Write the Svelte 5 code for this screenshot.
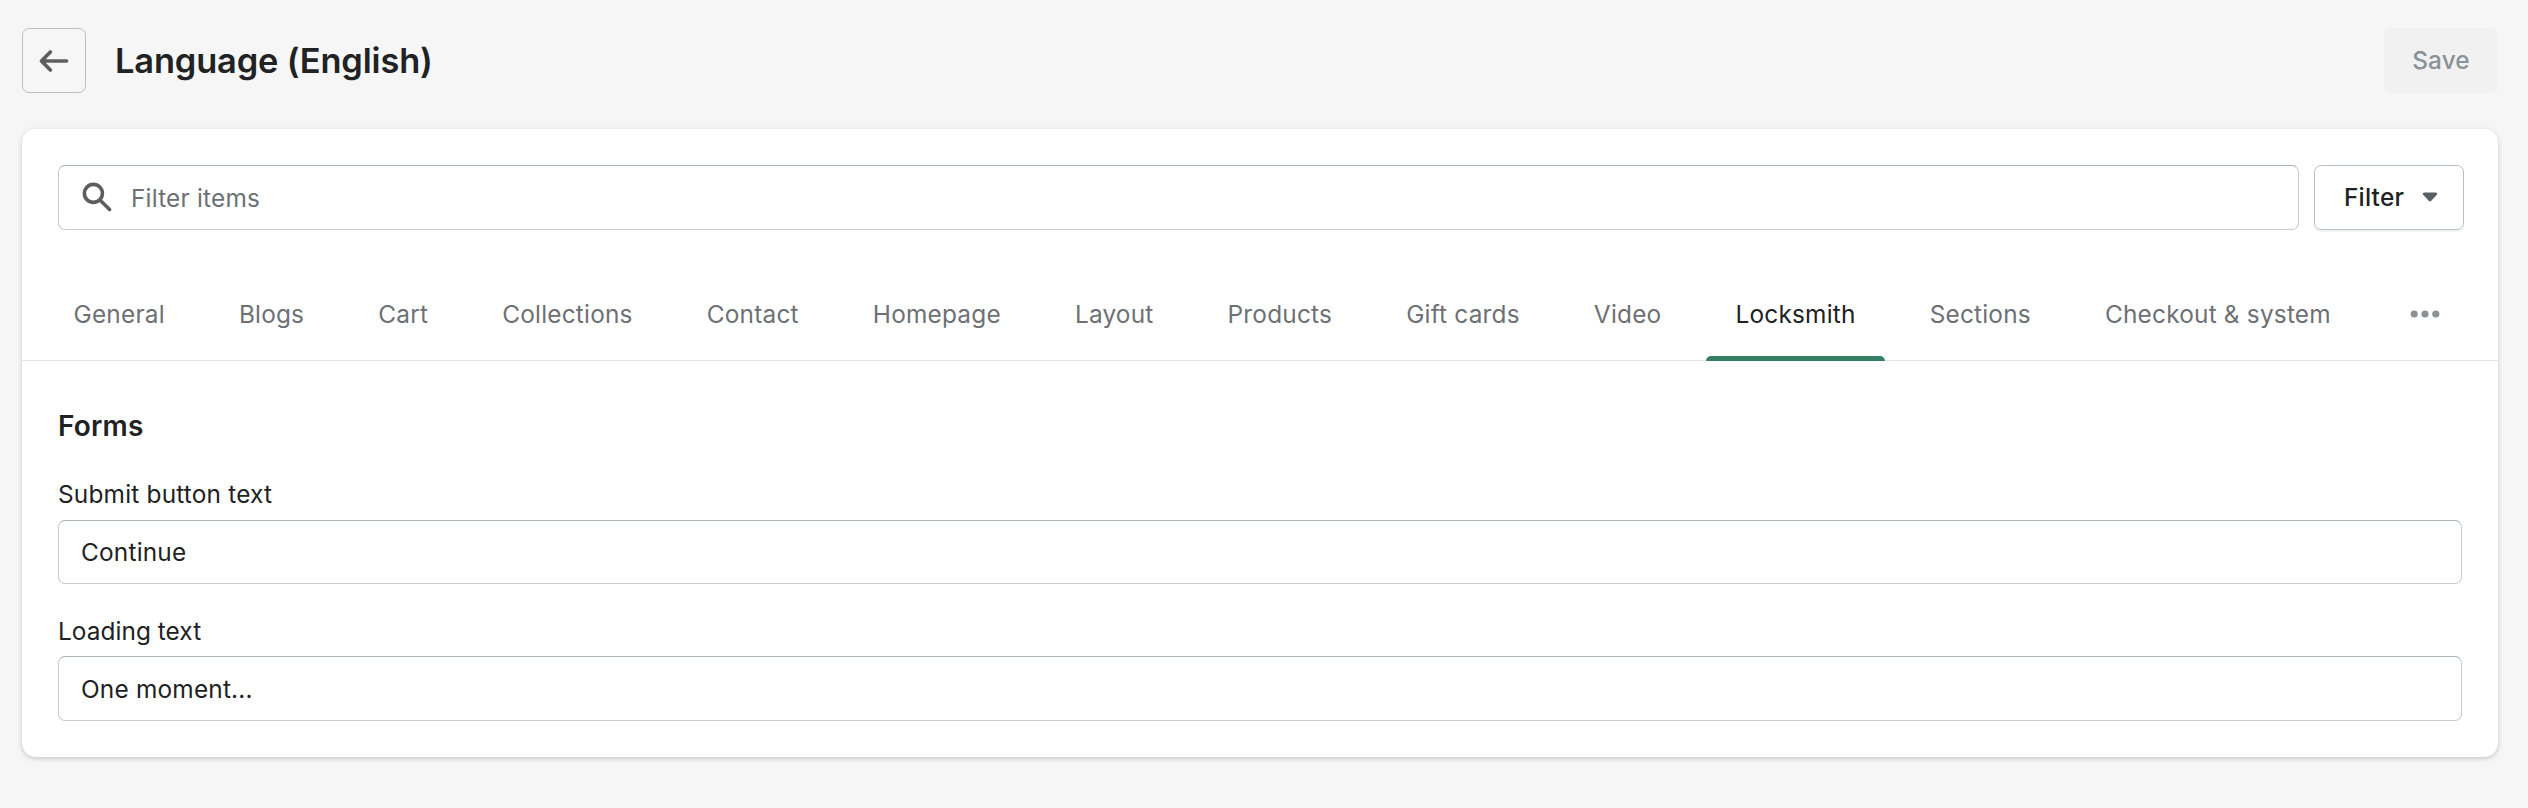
<script>
  const tabs = [
    'General', 'Blogs', 'Cart', 'Collections', 'Contact', 'Homepage', 'Layout',
    'Products', 'Gift cards', 'Video', 'Locksmith', 'Sections', 'Checkout & system'
  ];
  let active = $state('Locksmith');
  let fields = $state([
    { id: 'submit', label: 'Submit button text', value: 'Continue' },
    { id: 'loading', label: 'Loading text', value: 'One moment...' }
  ]);
</script>

<div class="page">
  <header class="header">
    <button class="back" aria-label="Back">
      <svg viewBox="0 0 20 20"><path d="M17 9H5.414l3.293-3.293a.999.999 0 1 0-1.414-1.414l-5 5a.999.999 0 0 0 0 1.414l5 5a.997.997 0 0 0 1.414 0 .999.999 0 0 0 0-1.414L5.414 11H17a1 1 0 1 0 0-2z" /></svg>
    </button>
    <h1>Language (English)</h1>
    <button class="save" disabled>Save</button>
  </header>

  <main class="card">
    <div class="filters">
      <div class="search">
        <svg viewBox="0 0 20 20"><path d="M8 12a4 4 0 1 1 0-8 4 4 0 0 1 0 8zm9.707 4.293-4.82-4.82A5.968 5.968 0 0 0 14 8 6 6 0 0 0 2 8a6 6 0 0 0 6 6 5.968 5.968 0 0 0 3.473-1.113l4.82 4.82a.997.997 0 0 0 1.414 0 .999.999 0 0 0 0-1.414z" /></svg>
        <input placeholder="Filter items" aria-label="Filter items" />
      </div>
      <button class="filter">
        <span>Filter</span>
        <svg viewBox="0 0 20 20"><path d="M13.098 8H6.902c-.751 0-1.172.754-.708 1.268L9.292 12.7c.36.399 1.055.399 1.416 0l3.098-3.433C14.27 8.754 13.849 8 13.098 8z" /></svg>
      </button>
    </div>

    <nav class="tabs">
      {#each tabs as tab}
        <button class="tab" class:active={tab === active} onclick={() => (active = tab)}>{tab}</button>
      {/each}
      <button class="more" aria-label="More">
        <svg viewBox="0 0 20 20"><path d="M6 10a2 2 0 1 1-4 0 2 2 0 0 1 4 0zm6 0a2 2 0 1 1-4 0 2 2 0 0 1 4 0zm6 0a2 2 0 1 1-4 0 2 2 0 0 1 4 0z" /></svg>
      </button>
    </nav>

    <section class="forms">
      <h2>Forms</h2>
      {#each fields as field (field.id)}
        <div class="field {field.id}">
          <label for={field.id}>{field.label}</label>
          <input id={field.id} bind:value={field.value} />
        </div>
      {/each}
    </section>
  </main>
</div>

<style>
  :global(body) {
    background: #f6f6f6;
  }
  .page,
  .page * {
    box-sizing: border-box;
  }
  .page {
    min-height: 808px;
    padding: 28px 30px 0 22px;
    background: #f6f6f6;
    color: #202223;
    font: 400 24.4px/30px Inter, sans-serif;
    letter-spacing: 0.2px;
  }
  button,
  input {
    margin: 0;
    padding: 0;
    border: 0;
    background: none;
    color: inherit;
    font: inherit;
    letter-spacing: inherit;
    outline: 0;
  }
  svg {
    display: block;
    flex: none;
    width: 36px;
    height: 36px;
    fill: #5c5f62;
  }
  .header {
    display: flex;
    align-items: flex-start;
    height: 65px;
  }
  .back {
    display: flex;
    align-items: center;
    justify-content: center;
    width: 64px;
    height: 65px;
    border: 1px solid #babfc3;
    border-radius: 7px;
  }
  h1 {
    flex: 1;
    margin: 12px 0 0 29px;
    font-size: 34.4px;
    font-weight: 600;
    line-height: 41px;
    letter-spacing: -0.15px;
  }
  .save {
    width: 114px;
    height: 65px;
    padding: 17px 0 18px;
    border-radius: 7px;
    background: #f1f1f1;
    color: #8c9196;
    font-weight: 500;
    letter-spacing: 0.1px;
  }
  .card {
    height: 628px;
    margin-top: 36px;
    padding-top: 36px;
    border-radius: 14px;
    background: #fff;
    box-shadow: 0 0 9px rgba(23, 24, 24, 0.05), 0 2px 4px rgba(0, 0, 0, 0.15);
  }
  .filters {
    display: flex;
    gap: 15px;
    padding: 0 34px 0 36px;
  }
  .search {
    display: flex;
    flex: 1;
    align-items: flex-start;
    height: 65px;
    padding: 13px 20px 0;
    border: 1px solid #c9cccf;
    border-top-color: #aeb4b9;
    border-radius: 7px;
  }
  .search input {
    flex: 1;
    height: 30px;
    margin: 4px 0 0 16px;
  }
  .search input::placeholder {
    color: #6d7175;
    opacity: 1;
  }
  .filter {
    display: flex;
    align-items: flex-start;
    gap: 8px;
    width: 150px;
    height: 65px;
    padding: 12px 0 0 29px;
    border: 1px solid #babfc3;
    border-radius: 7px;
    box-shadow: 0 2px 0 rgba(0, 0, 0, 0.05);
    font-weight: 500;
  }
  .filter span {
    margin-top: 4px;
  }
  .tabs {
    display: flex;
    gap: 15px;
    height: 131px;
    padding: 44px 0 0 22px;
    border-bottom: 1px solid #e1e3e5;
  }
  .tab {
    height: 87px;
    padding: 25px 29.55px 27px;
    border-bottom: 5px solid transparent;
    color: #6d7175;
    white-space: nowrap;
  }
  .tab.active {
    position: relative;
    color: #202223;
    border-bottom: 0;
    padding-bottom: 32px;
  }
  .tab.active::after {
    content: '';
    position: absolute;
    right: 0;
    bottom: 0;
    left: 0;
    height: 5px;
    border-radius: 5px 5px 0 0;
    background: #358062;
  }
  .more {
    height: 36px;
    margin: 22px 0 0 32px;
  }
  .more svg {
    fill: #8c9196;
  }
  .forms {
    padding: 48px 36px 0;
  }
  h2 {
    margin: 0;
    font-size: 28px;
    font-weight: 600;
    line-height: 34px;
    letter-spacing: 0.2px;
  }
  .field {
    display: flex;
    flex-direction: column;
    gap: 11px;
    margin-top: 36px;
  }
  .field + .field {
    gap: 10px;
    margin-top: 32px;
  }
  .field input {
    height: 64px;
    padding: 16px 22px 16px;
    border: 1px solid #c9cccf;
    border-top-color: #aeb4b9;
    border-radius: 7px;
  }
  .field + .field input {
    height: 65px;
    padding-top: 17px;
  }
  .field + .field label {
    letter-spacing: 0.05px;
  }
</style>
